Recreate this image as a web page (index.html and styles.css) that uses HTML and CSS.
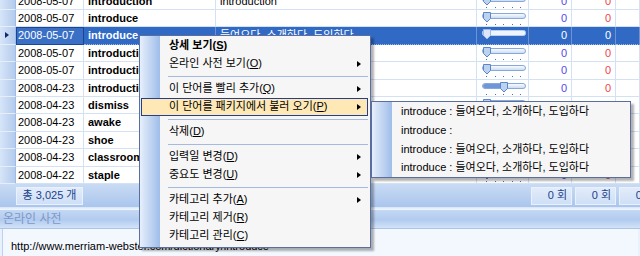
FILE: index.html
```html
<!DOCTYPE html>
<html lang="ko">
<head>
  <meta charset="UTF-8" />
  <title>단어장</title>
  <link rel="stylesheet" href="styles.css">
</head>
<body>

<svg class="defs" width="0" height="0">
  <defs>
    <linearGradient id="trk" x1="0" y1="0" x2="0" y2="1">
      <stop offset="0" stop-color="#ffffff" />
      <stop offset="1" stop-color="#c6d9f3" />
    </linearGradient>
    <symbol id="ticks" viewBox="0 0 48 17">
      <rect x="4" y="14" width="1" height="1" fill="#4c6fae" />
      <rect x="13" y="14" width="1" height="1" fill="#4c6fae" />
      <rect x="21" y="14" width="1" height="1" fill="#4c6fae" />
      <rect x="30" y="14" width="1" height="1" fill="#4c6fae" />
      <rect x="38" y="14" width="1" height="1" fill="#4c6fae" />
    </symbol>
    <symbol id="track" viewBox="0 0 48 17">
      <rect x="0.5" y="3.5" width="43" height="5" rx="2.5" fill="url(#trk)" stroke="#86a8da" />
    </symbol>
  </defs>
</svg>

<div class="grid">
  <div class="row first">
    <div class="hd"></div><div class="c date">2008-05-07</div><div class="c word">introduction</div>
    <div class="c mean">introduction</div>
    <div class="c sl"><svg width="48" height="17"><use href="#track"/><use href="#ticks"/><path d="M1.5 2.5h7v6l-3.5 3.5l-3.5-3.5z" fill="#bcd2f1" stroke="#5d86c6"/></svg></div>
    <div class="c n1">0</div><div class="c n2">0</div><div class="c last"></div>
  </div>
  <div class="row">
    <div class="hd"></div><div class="c date">2008-05-07</div><div class="c word">introduce</div>
    <div class="c mean"></div>
    <div class="c sl"><svg width="48" height="17"><use href="#track"/><use href="#ticks"/><path d="M1.5 2.5h7v6l-3.5 3.5l-3.5-3.5z" fill="#bcd2f1" stroke="#5d86c6"/></svg></div>
    <div class="c n1">0</div><div class="c n2">0</div><div class="c last"></div>
  </div>
  <div class="row sel">
    <div class="hd"><span class="cur"></span></div><div class="c date">2008-05-07</div><div class="c word">introduce</div>
    <div class="c mean">들여오다, 소개하다, 도입하다</div>
    <div class="c sl"><svg width="48" height="17"><rect x="0.5" y="3.5" width="43" height="5" rx="2" fill="#eef4fd" stroke="#b9cff0"/><path d="M1.5 2.5h7v6l-3.5 3.5l-3.5-3.5z" fill="#dbe7f8" stroke="#9db9e6"/></svg></div>
    <div class="c n1">0</div><div class="c n2">0</div><div class="c last"></div>
  </div>
  <div class="row">
    <div class="hd"></div><div class="c date">2008-05-07</div><div class="c word">introduction</div>
    <div class="c mean"></div>
    <div class="c sl"><svg width="48" height="17"><use href="#track"/><use href="#ticks"/><path d="M1.5 2.5h7v6l-3.5 3.5l-3.5-3.5z" fill="#bcd2f1" stroke="#5d86c6"/></svg></div>
    <div class="c n1">0</div><div class="c n2">0</div><div class="c last"></div>
  </div>
  <div class="row">
    <div class="hd"></div><div class="c date">2008-05-07</div><div class="c word">introduction</div>
    <div class="c mean"></div>
    <div class="c sl"><svg width="48" height="17"><use href="#track"/><use href="#ticks"/><path d="M1.5 2.5h7v6l-3.5 3.5l-3.5-3.5z" fill="#bcd2f1" stroke="#5d86c6"/></svg></div>
    <div class="c n1">0</div><div class="c n2">0</div><div class="c last"></div>
  </div>
  <div class="row">
    <div class="hd"></div><div class="c date">2008-04-23</div><div class="c word">introduction</div>
    <div class="c mean"></div>
    <div class="c sl"><svg width="48" height="17"><use href="#track"/><use href="#ticks"/><rect x="1" y="4" width="20" height="4" rx="2" fill="#6f96d6"/><path d="M18.5 2.5h7v6l-3.5 3.5l-3.5-3.5z" fill="#bcd2f1" stroke="#5d86c6"/></svg></div>
    <div class="c n1">0</div><div class="c n2">0</div><div class="c last"></div>
  </div>
  <div class="row">
    <div class="hd"></div><div class="c date">2008-04-23</div><div class="c word">dismiss</div>
    <div class="c mean"></div>
    <div class="c sl"><svg width="48" height="17"><use href="#track"/><use href="#ticks"/><path d="M1.5 2.5h7v6l-3.5 3.5l-3.5-3.5z" fill="#bcd2f1" stroke="#5d86c6"/></svg></div>
    <div class="c n1">0</div><div class="c n2">0</div><div class="c last"></div>
  </div>
  <div class="row">
    <div class="hd"></div><div class="c date">2008-04-23</div><div class="c word">awake</div>
    <div class="c mean"></div>
    <div class="c sl"><svg width="48" height="17"><use href="#track"/><use href="#ticks"/><path d="M1.5 2.5h7v6l-3.5 3.5l-3.5-3.5z" fill="#bcd2f1" stroke="#5d86c6"/></svg></div>
    <div class="c n1">0</div><div class="c n2">0</div><div class="c last"></div>
  </div>
  <div class="row">
    <div class="hd"></div><div class="c date">2008-04-23</div><div class="c word">shoe</div>
    <div class="c mean"></div>
    <div class="c sl"><svg width="48" height="17"><use href="#track"/><use href="#ticks"/><path d="M1.5 2.5h7v6l-3.5 3.5l-3.5-3.5z" fill="#bcd2f1" stroke="#5d86c6"/></svg></div>
    <div class="c n1">0</div><div class="c n2">0</div><div class="c last"></div>
  </div>
  <div class="row">
    <div class="hd"></div><div class="c date">2008-04-23</div><div class="c word">classroom</div>
    <div class="c mean"></div>
    <div class="c sl"><svg width="48" height="17"><use href="#track"/><use href="#ticks"/><path d="M1.5 2.5h7v6l-3.5 3.5l-3.5-3.5z" fill="#bcd2f1" stroke="#5d86c6"/></svg></div>
    <div class="c n1">0</div><div class="c n2">0</div><div class="c last"></div>
  </div>
  <div class="row">
    <div class="hd"></div><div class="c date">2008-04-22</div><div class="c word">staple</div>
    <div class="c mean"></div>
    <div class="c sl"><svg width="48" height="17"><use href="#track"/><use href="#ticks"/><path d="M1.5 2.5h7v6l-3.5 3.5l-3.5-3.5z" fill="#bcd2f1" stroke="#5d86c6"/></svg></div>
    <div class="c n1">0</div><div class="c n2">0</div><div class="c last"></div>
  </div>
</div>

<div class="summary">
  <div class="sum-cell total">총 3,025 개</div>
  <div class="sum-gap"></div>
  <div class="sum-cell cnt">0 회</div>
  <div class="sum-cell cnt">0 회</div>
  <div class="sum-cell cnt">0 회</div>
</div>
<div class="split"></div>

<div class="panel-head">온라인 사전</div>
<div class="panel-body">
  <div class="url">http://www.merriam-webster.com/dictionary/introduce</div>
</div>

<!-- context menu -->
<div class="menu">
  <div class="item bold">상세 보기(<u>S</u>)</div>
  <div class="item sub">온라인 사전 보기(<u>O</u>)</div>
  <div class="sep"></div>
  <div class="item sub">이 단어를 빨리 추가(<u>Q</u>)</div>
  <div class="item sub hot">이 단어를 패키지에서 불러 오기(<u>P</u>)</div>
  <div class="sep"></div>
  <div class="item">삭제(<u>D</u>)</div>
  <div class="sep"></div>
  <div class="item sub">입력일 변경(<u>D</u>)</div>
  <div class="item sub">중요도 변경(<u>U</u>)</div>
  <div class="sep"></div>
  <div class="item sub">카테고리 추가(<u>A</u>)</div>
  <div class="item">카테고리 제거(<u>R</u>)</div>
  <div class="item">카테고리 관리(<u>C</u>)</div>
</div>

<div class="menu submenu">
  <div class="item">introduce : 들여오다, 소개하다, 도입하다</div>
  <div class="item">introduce :</div>
  <div class="item">introduce : 들여오다, 소개하다, 도입하다</div>
  <div class="item">introduce : 들여오다, 소개하다, 도입하다</div>
</div>

</body>
</html>
```

FILE: styles.css
```css
* {
  box-sizing: border-box;
}
body {
  margin: 0;
  width: 640px;
  height: 256px;
  overflow: hidden;
  position: relative;
  background: #e8f1fc;
  font-family: "Liberation Sans", "Noto Sans CJK KR", sans-serif;
  font-size: 11px;
  color: #000;
}
.defs {
  position: absolute;
}

/* grid */
.grid {
  margin-top: -7.4px;
  background: #fff;
}
.row {
  display: grid;
  grid-template-columns: 16px 68px 132px 261px 52px 43px 44px 24px;
  height: 17.4px;
  line-height: 16.4px;
}
.hd {
  background: linear-gradient(to right, #d7e5f8, #b3cbee);
  border-bottom: 1px solid #e6eefa;
  border-right: 1px solid #9fbbe6;
  position: relative;
}
.cur {
  position: absolute;
  left: 5px;
  top: 5px;
  border-left: 4px solid #102a6e;
  border-top: 3.5px solid transparent;
  border-bottom: 3.5px solid transparent;
}
.c {
  border-right: 1px solid #d3e1f5;
  border-bottom: 1px solid #d3e1f5;
  white-space: nowrap;
  overflow: hidden;
}
.date {
  padding-left: 2px;
}
.word {
  padding-left: 4px;
  font-weight: bold;
}
.mean {
  padding-left: 4px;
}
.sl {
  padding-left: 5px;
}
.sl svg {
  display: block;
}
.n1, .n2 {
  text-align: right;
  padding-right: 4px;
}
.n1 {
  color: #5447ec;
}
.n2 {
  color: #f0444c;
}
.sel .c {
  background: #316ac5;
  color: #fff;
  border-bottom: 1px dotted #9cb8e6;
  border-right-color: #6d93d3;
}
.sel .date {
  background: #3a6fc6;
  outline: 1px solid #1d4596;
  outline-offset: -1px;
}

/* summary bar */
.summary {
  display: flex;
  height: 22.6px;
  padding: 3px 0 2px 16px;
  background: linear-gradient(#c9dbf4, #aac6ed);
  gap: 3px;
  color: #1b3f8d;
  overflow: hidden;
}
.summary > div {
  flex: none;
}
.sum-cell {
  background: linear-gradient(#e2ecfa, #cfdff6);
  border: 1px solid #e9f1fc;
  line-height: 15px;
  white-space: nowrap;
}
.total {
  width: 67px;
  text-align: center;
}
.sum-gap {
  width: 442px;
}
.cnt {
  width: 41px;
  text-align: right;
  padding-right: 4px;
}
.split {
  height: 3px;
  background: linear-gradient(#d7e5f8, #f4f8fe);
}

/* online dictionary panel */
.panel-head {
  height: 19px;
  line-height: 19px;
  padding-left: 3px;
  color: #7e98c6;
  font-size: 12px;
  background: linear-gradient(#c4d8f3, #b1cbef 55%, #d3e3f8);
  border-bottom: 1px solid #a9c5ec;
}
.panel-body {
  height: 30px;
  margin: 0 2px;
  padding: 11px 0 0 8px;
  background: #f3f7fe;
  border-left: 1px solid #bcd2f2;
}
.url {
  white-space: nowrap;
}

/* context menu */
.menu {
  position: absolute;
  left: 139px;
  top: 35px;
  width: 232px;
  height: 213px;
  padding: 1px 2px 1px 1px;
  border: 1px solid #5b6f9f;
  background: linear-gradient(to right, #e7effb, #9ebde9) 0 0 / 20px 100% no-repeat, #f6f6f6;
  box-shadow: 3px 3px 2px rgba(0, 0, 0, 0.3);
}
.item {
  height: 18px;
  line-height: 17px;
  padding-left: 28px;
  position: relative;
  white-space: nowrap;
}
.bold {
  font-weight: bold;
}
.sub::after {
  content: "";
  position: absolute;
  right: 7px;
  top: 6px;
  border-left: 4px solid #000;
  border-top: 3.5px solid transparent;
  border-bottom: 3.5px solid transparent;
}
.hot {
  background: #fee9b6;
  border: 1px solid #243f8c;
  padding-left: 27px;
  line-height: 15px;
}
.hot::after {
  right: 6px;
  top: 5px;
}
.sep {
  height: 7px;
  margin-left: 27px;
  position: relative;
}
.sep::before {
  content: "";
  position: absolute;
  left: 0;
  right: 0;
  top: 3px;
  height: 1px;
  background: #a4badf;
}
.submenu {
  left: 371px;
  top: 101px;
  width: 260px;
  height: 77px;
  padding: 0 1px;
}
.submenu .item {
  height: 18.75px;
  line-height: 18.75px;
}
```
